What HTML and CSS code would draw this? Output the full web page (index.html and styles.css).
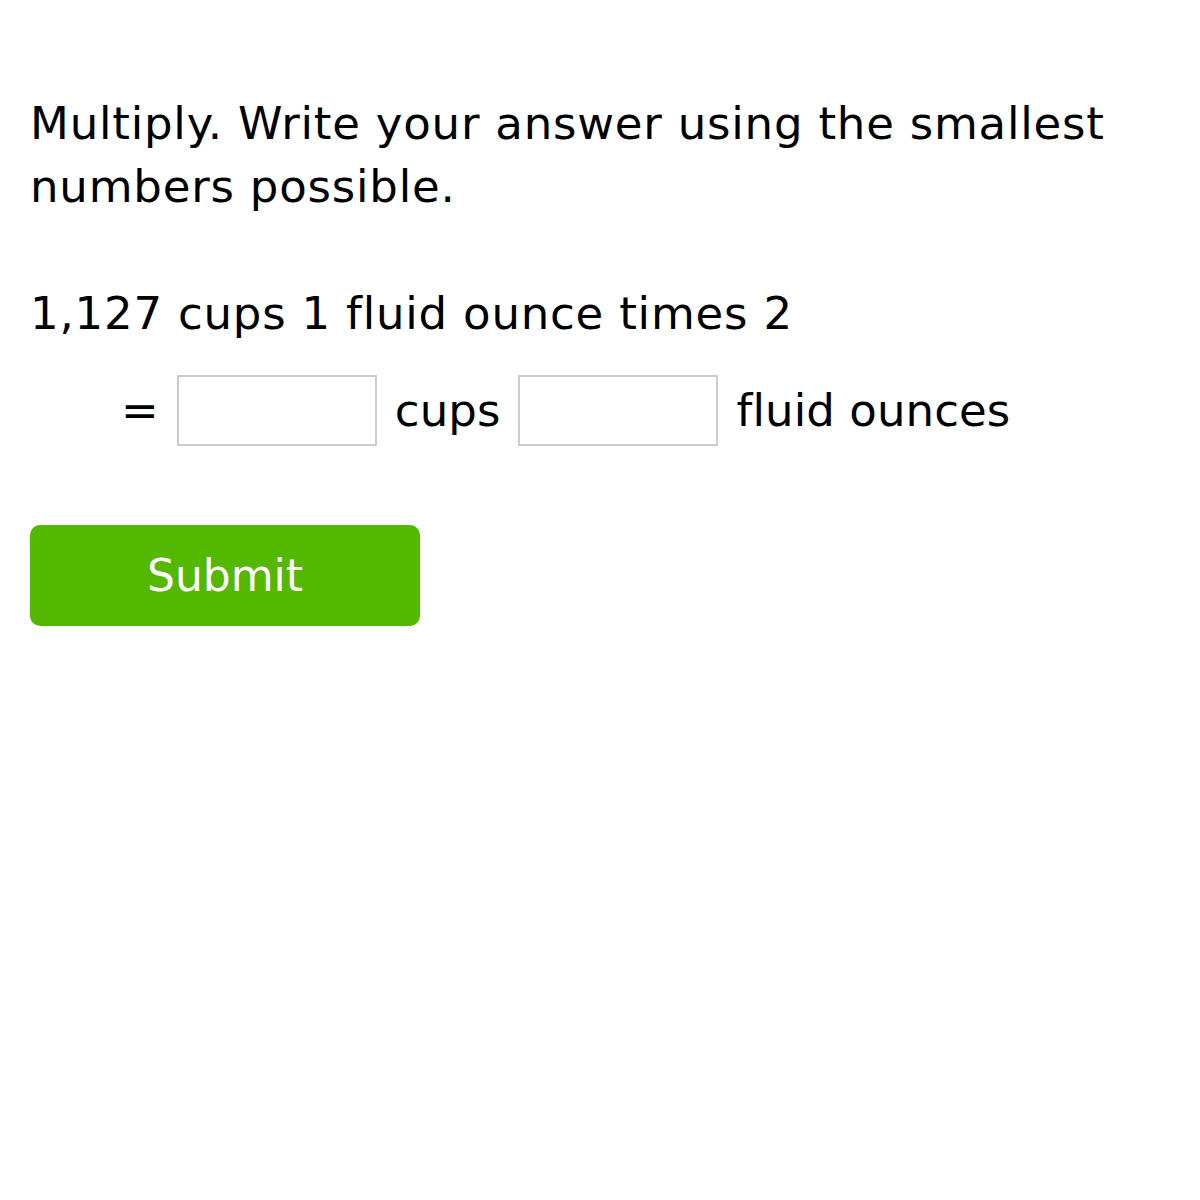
FILE: index.html
```html
<!DOCTYPE html>
<html>
<head>
    <title>Multiply</title>
    <link rel="stylesheet" href="styles.css">
</head>
<body>
    <div class="question">
        <p class="prompt">Multiply. Write your answer using the smallest numbers possible.</p>
        <p class="problem">1,127 cups 1 fluid ounce times 2</p>
        <div class="answer-row">
            <span class="equals">=</span>
            <input type="text" class="answer-box" aria-label="cups">
            <span class="unit">cups</span>
            <input type="text" class="answer-box" aria-label="fluid ounces">
            <span class="unit">fluid ounces</span>
        </div>
        <button class="submit-btn" type="button">Submit</button>
    </div>
</body>
</html>
```

FILE: styles.css
```css
body {
    margin: 0;
    font-family: "DejaVu Sans", Verdana, sans-serif;
    color: #000;
    background: #fff;
}

.question {
    padding: 92px 30px 0 30px;
    font-size: 45px;
    letter-spacing: 0.8px;
}

.prompt {
    margin: 0;
    line-height: 63px;
}

.problem {
    margin: 64px 0 0 0;
    line-height: 63px;
}

.answer-row {
    display: flex;
    align-items: center;
    margin: 30px 0 0 91px;
    letter-spacing: 0.1px;
}

.equals {
    margin-right: 18px;
}

.answer-box {
    width: 200px;
    height: 71px;
    box-sizing: border-box;
    border: 2px solid #ccc;
    margin: 0 18px 0 0;
    padding: 0;
}

.unit {
    margin-right: 18px;
}

.submit-btn {
    display: block;
    margin-top: 79px;
    width: 390px;
    height: 101px;
    border: none;
    border-radius: 10px;
    background-color: #54b800;
    color: #fff;
    font-family: "DejaVu Sans", Verdana, sans-serif;
    font-size: 44px;
}
```
